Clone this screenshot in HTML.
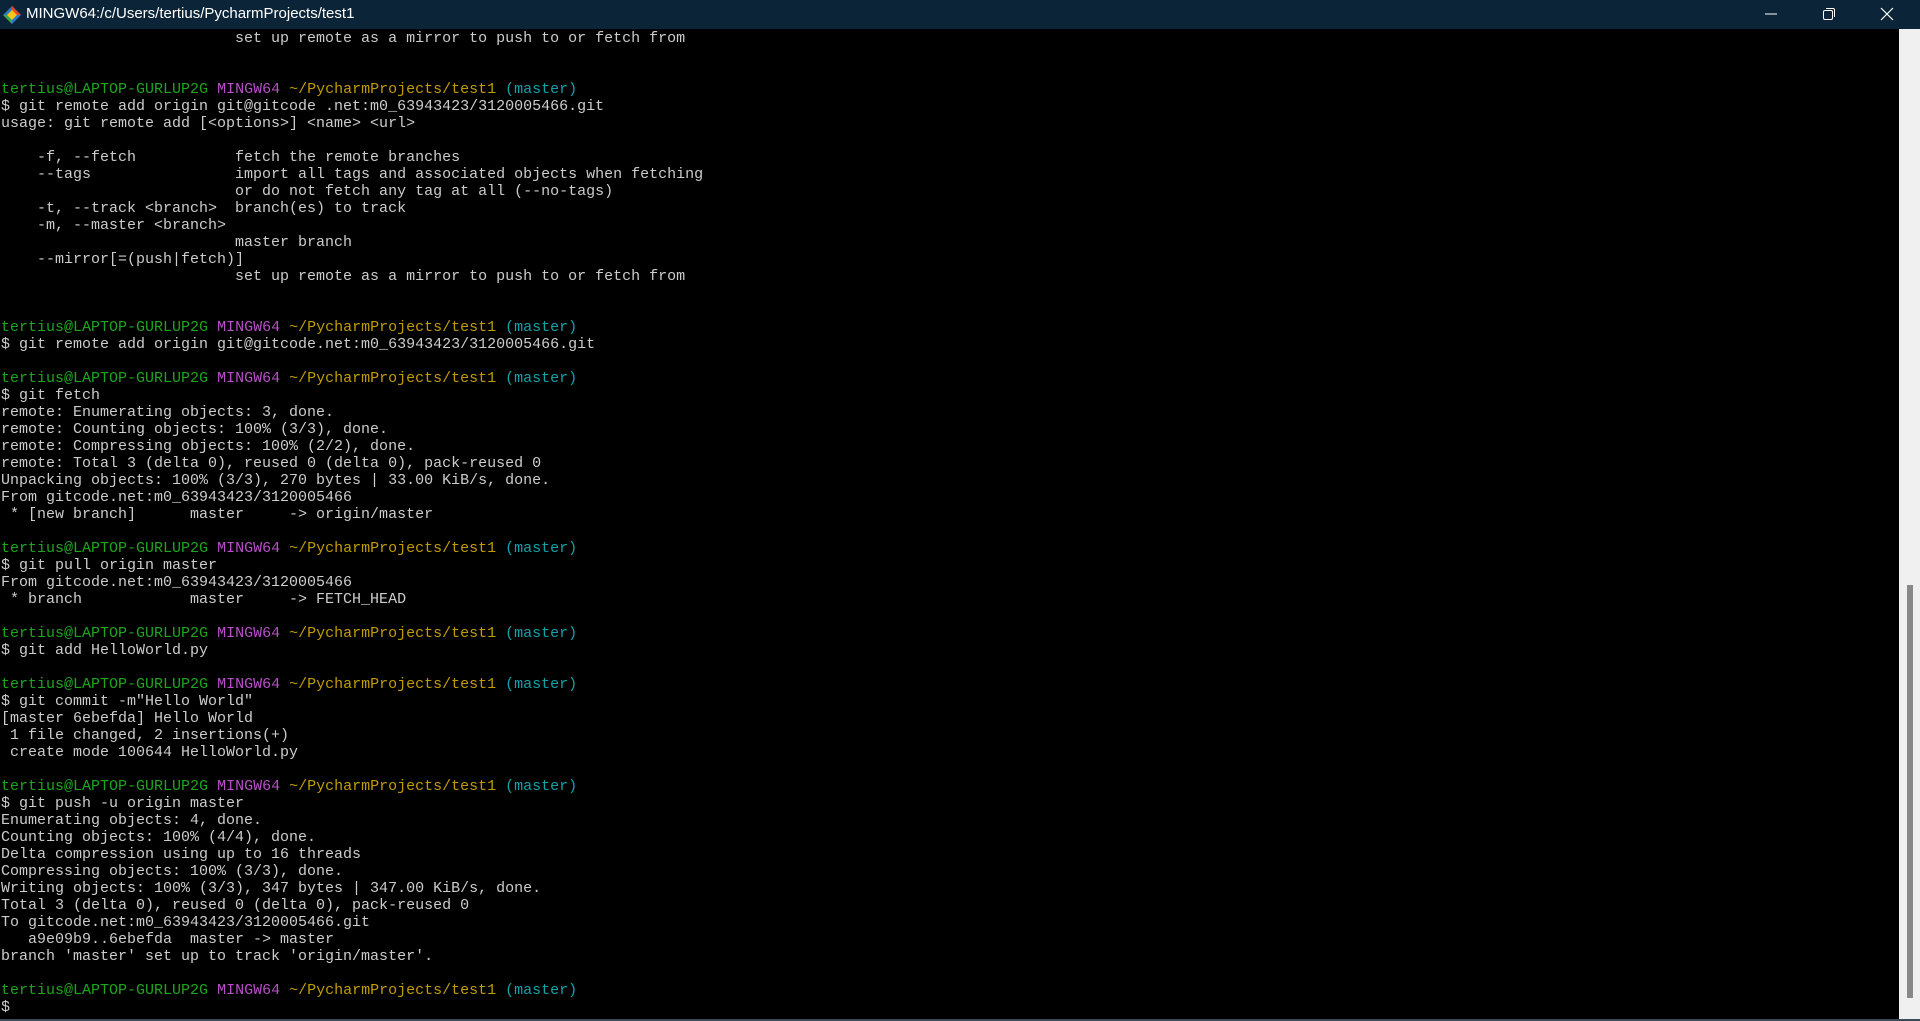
<!DOCTYPE html>
<html><head><meta charset="utf-8"><style>
html,body{margin:0;padding:0;width:1920px;height:1021px;background:#000;overflow:hidden}
.tb{position:absolute;left:0;top:0;width:1920px;height:29px;background:#0c2438;color:#fff;font:15px "Liberation Sans",sans-serif}
.tb .t{position:absolute;left:26px;top:5px}
pre{position:absolute;left:1px;top:30px;margin:0;font:15px/17px "Liberation Mono",monospace;color:#cccccc;white-space:pre}
.g{color:#1ea51e}.m{color:#b84fc8}.y{color:#c19c00}.c{color:#13a3a8}
.sb{position:absolute;left:1899px;top:29px;width:21px;height:990px;background:#f0f0f0}
.th{position:absolute;left:8px;top:556px;width:6px;height:413px;background:#888}
.bl{position:absolute;left:0;top:1019px;width:1920px;height:2px;background:#3a4a58}
</style></head><body>
<div class="tb">
<svg style="position:absolute;left:2px;top:5px" width="20" height="20" viewBox="0 0 20 20"><path d="M10 1 L19 10 L10 19 L1 10Z" fill="#2a78c8"/><path d="M10 1 L19 10 L10 10Z" fill="#e04a2a"/><path d="M10 10 L10 19 L1 10Z" fill="#3aa84a"/><path d="M10 5 L15 10 L10 15 L5 10Z" fill="#f5c518"/></svg>
<span class="t">MINGW64:/c/Users/tertius/PycharmProjects/test1</span>
<svg style="position:absolute;left:1764px;top:8px" width="14" height="14"><line x1="1" y1="6" x2="13" y2="6" stroke="#fff" stroke-width="1"/></svg>
<svg style="position:absolute;left:1822px;top:7px" width="14" height="14"><rect x="1.5" y="3.5" width="9" height="9" rx="1.5" fill="none" stroke="#fff"/><path d="M4 1.5 H11 Q12.5 1.5 12.5 3 V10" fill="none" stroke="#fff"/></svg>
<svg style="position:absolute;left:1880px;top:7px" width="14" height="14"><path d="M1 1 L13 13 M13 1 L1 13" stroke="#fff" stroke-width="1.2"/></svg>
</div>
<pre>                          set up remote as a mirror to push to or fetch from


<span class="g">tertius@LAPTOP-GURLUP2G</span> <span class="m">MINGW64</span> <span class="y">~/PycharmProjects/test1</span> <span class="c">(master)</span>
$ git remote add origin git@gitcode .net:m0_63943423/3120005466.git
usage: git remote add [&lt;options&gt;] &lt;name&gt; &lt;url&gt;

    -f, --fetch           fetch the remote branches
    --tags                import all tags and associated objects when fetching
                          or do not fetch any tag at all (--no-tags)
    -t, --track &lt;branch&gt;  branch(es) to track
    -m, --master &lt;branch&gt;
                          master branch
    --mirror[=(push|fetch)]
                          set up remote as a mirror to push to or fetch from


<span class="g">tertius@LAPTOP-GURLUP2G</span> <span class="m">MINGW64</span> <span class="y">~/PycharmProjects/test1</span> <span class="c">(master)</span>
$ git remote add origin git@gitcode.net:m0_63943423/3120005466.git

<span class="g">tertius@LAPTOP-GURLUP2G</span> <span class="m">MINGW64</span> <span class="y">~/PycharmProjects/test1</span> <span class="c">(master)</span>
$ git fetch
remote: Enumerating objects: 3, done.
remote: Counting objects: 100% (3/3), done.
remote: Compressing objects: 100% (2/2), done.
remote: Total 3 (delta 0), reused 0 (delta 0), pack-reused 0
Unpacking objects: 100% (3/3), 270 bytes | 33.00 KiB/s, done.
From gitcode.net:m0_63943423/3120005466
 * [new branch]      master     -&gt; origin/master

<span class="g">tertius@LAPTOP-GURLUP2G</span> <span class="m">MINGW64</span> <span class="y">~/PycharmProjects/test1</span> <span class="c">(master)</span>
$ git pull origin master
From gitcode.net:m0_63943423/3120005466
 * branch            master     -&gt; FETCH_HEAD

<span class="g">tertius@LAPTOP-GURLUP2G</span> <span class="m">MINGW64</span> <span class="y">~/PycharmProjects/test1</span> <span class="c">(master)</span>
$ git add HelloWorld.py

<span class="g">tertius@LAPTOP-GURLUP2G</span> <span class="m">MINGW64</span> <span class="y">~/PycharmProjects/test1</span> <span class="c">(master)</span>
$ git commit -m"Hello World"
[master 6ebefda] Hello World
 1 file changed, 2 insertions(+)
 create mode 100644 HelloWorld.py

<span class="g">tertius@LAPTOP-GURLUP2G</span> <span class="m">MINGW64</span> <span class="y">~/PycharmProjects/test1</span> <span class="c">(master)</span>
$ git push -u origin master
Enumerating objects: 4, done.
Counting objects: 100% (4/4), done.
Delta compression using up to 16 threads
Compressing objects: 100% (3/3), done.
Writing objects: 100% (3/3), 347 bytes | 347.00 KiB/s, done.
Total 3 (delta 0), reused 0 (delta 0), pack-reused 0
To gitcode.net:m0_63943423/3120005466.git
   a9e09b9..6ebefda  master -&gt; master
branch 'master' set up to track 'origin/master'.

<span class="g">tertius@LAPTOP-GURLUP2G</span> <span class="m">MINGW64</span> <span class="y">~/PycharmProjects/test1</span> <span class="c">(master)</span>
$</pre>
<div class="sb"><div class="th"></div></div>
<div class="bl"></div>
</body></html>
